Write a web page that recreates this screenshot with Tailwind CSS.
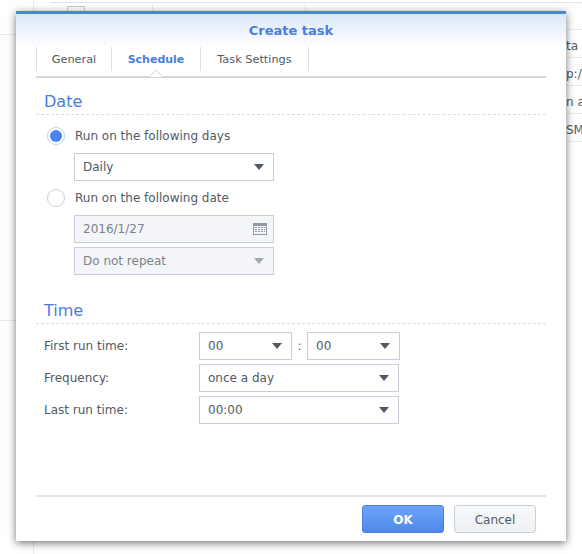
<!DOCTYPE html>
<html lang="en">
<head>
    <meta charset="UTF-8">
    <script src="https://cdn.jsdelivr.net/npm/@tailwindcss/browser@4"></script>
    <title>Create task</title>
</head>
<body class="bg-white">
<div class="relative w-[582px] h-[554px] overflow-hidden bg-white font-['DejaVu_Sans',sans-serif] text-[12px] text-[#505a64]">

    <!-- page behind the dialog -->
    <div class="absolute left-[33px] top-0 w-px h-full bg-[#e8ebf0]"></div>
    <div class="absolute left-[50px] top-[2px] w-[532px] h-px bg-[#dfe4ec]"></div>
    <div class="absolute left-[67px] top-[6px] w-[18px] h-[6px] border border-[#c8ced9]"></div>
    <div class="absolute left-[152px] top-[2px] w-px h-[10px] bg-[#e8ebf0]"></div>
    <div class="absolute left-[305px] top-[2px] w-px h-[10px] bg-[#e8ebf0]"></div>
    <div class="absolute left-0 top-[34px] w-[33px] h-px bg-[#e8ebf0]"></div>
    <div class="absolute left-0 top-[320px] w-[33px] h-px bg-[#e8ebf0]"></div>
    <div class="absolute left-[566px] top-[29px] w-4 h-px bg-[#e8ebf0]"></div>
    <div class="absolute left-[566px] top-[57px] w-4 h-px bg-[#e8ebf0]"></div>
    <div class="absolute left-[566px] top-[85px] w-4 h-px bg-[#e8ebf0]"></div>
    <div class="absolute left-[566px] top-[113px] w-4 h-px bg-[#e8ebf0]"></div>
    <div class="absolute left-[566px] top-[141px] w-4 h-px bg-[#e8ebf0]"></div>
    <div class="absolute left-[566px] top-[37px] whitespace-nowrap">ta</div>
    <div class="absolute left-[566px] top-[65px] whitespace-nowrap">p:/</div>
    <div class="absolute left-[566px] top-[93px] whitespace-nowrap">n al</div>
    <div class="absolute left-[566px] top-[121px] whitespace-nowrap">SM</div>

    <!-- dialog -->
    <div class="absolute left-4 top-[11px] w-[550px] h-[530px] flex flex-col bg-white border-t-[3px] border-[#4a84e0] shadow-[0_2px_8px_rgba(0,0,0,0.55)]">
        <div class="h-[33px] shrink-0 flex items-center justify-center bg-gradient-to-b from-[#dbe8f9] to-white">
            <span class="text-[13px] font-bold text-[#4a7de0]">Create task</span>
        </div>

        <div class="mx-5 flex h-[31px] shrink-0 border-b-2 border-[#d5d7da] text-[11.3px]">
            <div class="w-[76px] h-[24px] pt-[2px] flex items-center justify-center border-x border-[#d9dfe9]">General</div>
            <div class="relative w-[89px] h-[24px] pt-[2px] flex items-center justify-center border-r border-[#d9dfe9] font-bold text-[11px] text-[#4a7de0]">
                Schedule
                <svg class="absolute left-[37px] top-[23px]" width="14" height="7" viewBox="0 0 14 7"><path d="M0 7 L7 0 L14 7" fill="#fff" stroke="#d5d7da"/></svg>
            </div>
            <div class="w-[108px] h-[24px] pt-[2px] flex items-center justify-center border-r border-[#d9dfe9]">Task Settings</div>
        </div>

        <div class="mx-5 flex-1 flex flex-col">
            <div class="h-[37px] pt-[14px] pl-2 border-b border-dashed border-[#d5dcee] text-[16px] leading-[20px] text-[#4a7de0]">Date</div>

            <div class="flex items-center h-[18px] mt-[12px] ml-[11px] gap-[10px]">
                <div class="w-[18px] h-[18px] rounded-full border border-[#c8d0dc] flex items-center justify-center">
                    <div class="w-[12px] h-[12px] rounded-full bg-[#4a84f0]"></div>
                </div>
                <span>Run on the following days</span>
            </div>
            <div class="ml-[38px] mt-[8px] w-[200px] h-[28px] border border-[#c8ced9] flex items-center justify-between pl-2 pr-[8px]">
                <span>Daily</span>
                <svg width="12" height="6" viewBox="0 0 12 6"><path d="M1 0 H11 L6 6 Z" fill="#505a64"/></svg>
            </div>

            <div class="flex items-center h-[18px] mt-[8px] ml-[11px] gap-[10px]">
                <div class="w-[18px] h-[18px] rounded-full border border-[#c8d0dc]"></div>
                <span>Run on the following date</span>
            </div>
            <div class="ml-[38px] mt-[8px] w-[200px] h-[28px] border border-[#c8ced9] bg-[#f4f5f8] flex items-center justify-between pl-2 pr-[6px] text-[#7a828b]">
                <span>2016/1/27</span>
                <svg width="14" height="12" viewBox="0 0 14 12"><rect width="14" height="12" fill="#8f98a3"/><rect x="1" y="3" width="12" height="8" fill="#f4f5f8"/><path d="M2 4h2v1H2zM5 4h2v1H5zM8 4h2v1H8zM11 4h1v1h-1zM2 6h2v1H2zM5 6h2v1H5zM8 6h2v1H8zM11 6h1v1h-1zM2 8h2v1H2zM5 8h2v1H5zM8 8h2v1H8zM11 8h1v1h-1z" fill="#8f98a3"/></svg>
            </div>
            <div class="ml-[38px] mt-[4px] w-[200px] h-[28px] border border-[#c8ced9] bg-[#f4f5f8] flex items-center justify-between pl-2 pr-[8px] text-[#7a828b]">
                <span>Do not repeat</span>
                <svg width="12" height="6" viewBox="0 0 12 6"><path d="M1 0 H11 L6 6 Z" fill="#a2a9b2"/></svg>
            </div>

            <div class="h-[37px] mt-[12px] pt-[14px] pl-2 border-b border-dashed border-[#d5dcee] text-[16px] leading-[20px] text-[#4a7de0]">Time</div>

            <div class="flex items-center mt-[8px] h-[28px] pl-2">
                <span class="w-[155px]">First run time:</span>
                <div class="w-[93px] h-[28px] border border-[#c8ced9] flex items-center justify-between pl-2 pr-[8px]">
                    <span>00</span>
                    <svg width="12" height="6" viewBox="0 0 12 6"><path d="M1 0 H11 L6 6 Z" fill="#505a64"/></svg>
                </div>
                <span class="w-[15px] text-center">:</span>
                <div class="w-[93px] h-[28px] border border-[#c8ced9] flex items-center justify-between pl-2 pr-[8px]">
                    <span>00</span>
                    <svg width="12" height="6" viewBox="0 0 12 6"><path d="M1 0 H11 L6 6 Z" fill="#505a64"/></svg>
                </div>
            </div>
            <div class="flex items-center mt-[4px] h-[28px] pl-2">
                <span class="w-[155px]">Frequency:</span>
                <div class="w-[200px] h-[28px] border border-[#c8ced9] flex items-center justify-between pl-2 pr-[8px]">
                    <span>once a day</span>
                    <svg width="12" height="6" viewBox="0 0 12 6"><path d="M1 0 H11 L6 6 Z" fill="#505a64"/></svg>
                </div>
            </div>
            <div class="flex items-center mt-[4px] h-[28px] pl-2">
                <span class="w-[155px]">Last run time:</span>
                <div class="w-[200px] h-[28px] border border-[#c8ced9] flex items-center justify-between pl-2 pr-[8px]">
                    <span>00:00</span>
                    <svg width="12" height="6" viewBox="0 0 12 6"><path d="M1 0 H11 L6 6 Z" fill="#505a64"/></svg>
                </div>
            </div>
        </div>

        <div class="mx-5 h-[46px] shrink-0 border-t-2 border-[#e3e4e6] flex items-start justify-end gap-[10px] pt-[8px] pr-[10px]">
            <div class="w-[82px] h-[28px] pt-[1px] rounded-[3px] border border-[#4a80d8] bg-gradient-to-b from-[#6aa5fb] to-[#4f88e8] flex items-center justify-center text-white text-[12px] font-bold">OK</div>
            <div class="w-[82px] h-[28px] pt-[1px] rounded-[3px] border border-[#c8d0dc] bg-gradient-to-b from-[#f8f9fb] to-[#eef0f5] flex items-center justify-center">Cancel</div>
        </div>
    </div>
</div>
</body>
</html>
